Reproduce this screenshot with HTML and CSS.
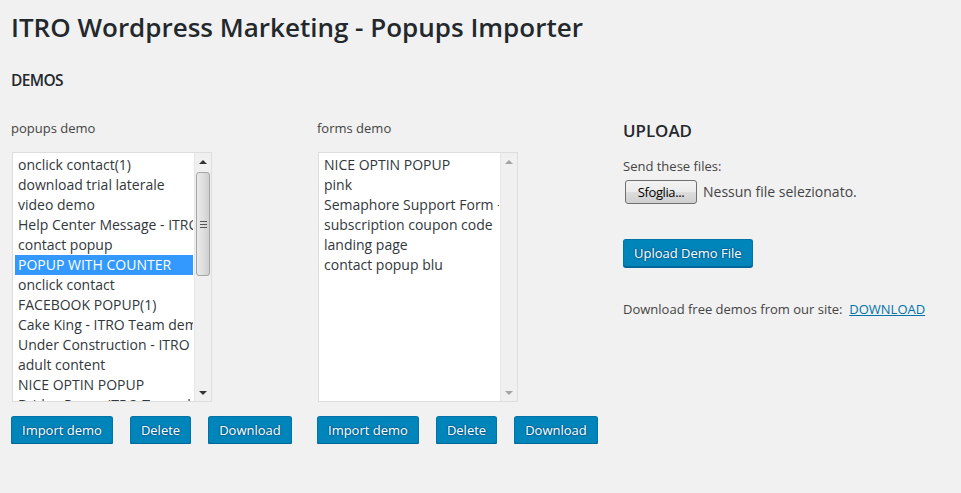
FILE: index.html
```html
<!DOCTYPE html>
<html lang="it">
<head>
<meta charset="utf-8">
<title>ITRO Wordpress Marketing - Popups Importer</title>
<link rel="stylesheet" href="styles.css">
</head>
<body>
<div class="wrap">
  <h1 class="page-title">ITRO Wordpress Marketing - Popups Importer</h1>
  <h3 class="section-title demos-title">DEMOS</h3>
  <div class="columns">
    <div class="col">
      <p class="label">popups demo</p>
      <div class="listbox">
        <ul class="items">
          <li>onclick contact(1)</li>
          <li>download trial laterale</li>
          <li>video demo</li>
          <li>Help Center Message - ITRO Team demo</li>
          <li>contact popup</li>
          <li class="selected">POPUP WITH COUNTER</li>
          <li>onclick contact</li>
          <li>FACEBOOK POPUP(1)</li>
          <li>Cake King - ITRO Team demo</li>
          <li>Under Construction - ITRO Team demo</li>
          <li>adult content</li>
          <li>NICE OPTIN POPUP</li>
          <li>Bridge Page - ITRO Team demo</li>
        </ul>
        <div class="scrollbar">
          <span class="arrow up"></span>
          <div class="track">
            <div class="thumb"><span class="grip"></span></div>
          </div>
          <span class="arrow down"></span>
        </div>
      </div>
      <div class="actions">
        <button class="button">Import demo</button>
        <button class="button">Delete</button>
        <button class="button">Download</button>
      </div>
    </div>
    <div class="col">
      <p class="label">forms demo</p>
      <div class="listbox">
        <ul class="items">
          <li>NICE OPTIN POPUP</li>
          <li>pink</li>
          <li>Semaphore Support Form - ITRO Team demo</li>
          <li>subscription coupon code</li>
          <li>landing page</li>
          <li>contact popup blu</li>
        </ul>
        <div class="scrollbar disabled">
          <span class="arrow up"></span>
          <div class="track"></div>
          <span class="arrow down"></span>
        </div>
      </div>
      <div class="actions">
        <button class="button">Import demo</button>
        <button class="button">Delete</button>
        <button class="button">Download</button>
      </div>
    </div>
    <div class="col upload">
      <h3 class="section-title upload-title">UPLOAD</h3>
      <p class="send">Send these files:</p>
      <div class="file-input">
        <span class="browse">Sfoglia...</span>
        <span class="no-file">Nessun file selezionato.</span>
      </div>
      <button class="button upload-btn">Upload Demo File</button>
      <p class="free">Download free demos from our site:&nbsp; <a href="#" class="link">DOWNLOAD</a></p>
    </div>
  </div>
</div>
</body>
</html>
```

FILE: styles.css
```css
html, body {
  margin: 0;
  padding: 0;
}
body {
  background: #f1f1f1;
  color: #444;
  font-family: "Open Sans", "Liberation Sans", sans-serif;
  font-size: 13px;
  line-height: 1.4em;
}
.wrap {
  padding: 11px 0 0 11px;
}
.page-title {
  margin: 0;
  font-size: 26px;
  font-weight: 600;
  line-height: 32px;
  color: #23282d;
}
.section-title {
  margin: 0;
  font-size: 16.9px;
  font-weight: 600;
  line-height: 20px;
  color: #23282d;
}
.demos-title {
  margin-top: 27px;
  font-size: 15.5px;
  letter-spacing: -0.6px;
}
.columns {
  display: grid;
  grid-template-columns: 306px 306px 306px;
  margin-top: 28px;
}
.label {
  margin: 0;
  line-height: 20px;
}
.listbox {
  margin: 14px 0 0 1px;
  width: 198px;
  height: 248px;
  border: 1px solid #ddd;
  background: #fff;
  display: flex;
  overflow: hidden;
}
.items {
  list-style: none;
  margin: 0;
  padding: 2px 1px 0 2px;
  width: 178px;
  flex: none;
  overflow: hidden;
  font-size: 14px;
  color: #32373c;
}
.items li {
  height: 20px;
  line-height: 20px;
  padding-left: 3px;
  white-space: nowrap;
  overflow: hidden;
}
.items li.selected {
  background: #3399ff;
  color: #fff;
}
.scrollbar {
  width: 17px;
  flex: none;
  background: #f0f0f0;
  border-left: 1px solid #e6e6e6;
  display: flex;
  flex-direction: column;
  box-sizing: border-box;
}
.arrow {
  height: 17px;
  flex: none;
  display: flex;
  align-items: center;
  justify-content: center;
}
.arrow::before {
  content: "";
  width: 0;
  height: 0;
  border-left: 4px solid transparent;
  border-right: 4px solid transparent;
}
.arrow.up::before {
  border-bottom: 4px solid #333;
}
.arrow.down::before {
  border-top: 4px solid #333;
}
.disabled .arrow.up::before {
  border-bottom-color: #a3a3a3;
}
.disabled .arrow.down::before {
  border-top-color: #a3a3a3;
}
.track {
  flex: 1;
}
.thumb {
  margin: 2px 1px 0 1px;
  height: 104px;
  border: 1px solid #a5a5a5;
  border-radius: 3px;
  background: linear-gradient(to right, #eaeaea, #dcdcdc 60%, #cfcfcf);
  box-sizing: border-box;
  display: flex;
  align-items: center;
  justify-content: center;
}
.grip {
  width: 7px;
  height: 7px;
  background: repeating-linear-gradient(to bottom, #555 0 1px, transparent 1px 3px);
}
.actions {
  display: flex;
  gap: 17px;
  margin-top: 14px;
}
.button {
  height: 28px;
  padding: 0 10px 1px;
  font-family: "Open Sans", "Liberation Sans", sans-serif;
  font-size: 13px;
  line-height: 26px;
  color: #fff;
  background: #0085ba;
  border: 1px solid #0073aa;
  border-bottom-color: #006799;
  border-radius: 3px;
  box-shadow: 0 1px 0 #006799;
  text-shadow: 0 -1px 1px #006799, 1px 0 1px #006799, 0 1px 1px #006799, -1px 0 1px #006799;
  cursor: pointer;
}
.upload {
  display: flex;
  flex-direction: column;
  align-items: flex-start;
}
.upload-title {
  margin-top: 3px;
}
.send {
  margin: 15px 0 0;
  line-height: 20px;
}
.file-input {
  display: flex;
  align-items: center;
  gap: 6px;
  margin: 4px 0 0 2px;
}
.browse {
  width: 72px;
  height: 24px;
  box-sizing: border-box;
  border: 1px solid #707070;
  border-radius: 3px;
  background: linear-gradient(to bottom, #f2f2f2, #ebebeb 50%, #dddddd 50%, #cfcfcf);
  color: #000;
  font-family: "Open Sans", "Liberation Sans", sans-serif;
  font-size: 13px;
  letter-spacing: -0.4px;
  line-height: 22px;
  text-align: center;
}
.no-file {
  font-size: 14px;
  color: #444;
}
.upload-btn {
  margin-top: 35px;
}
.free {
  margin: 32px 0 0;
  line-height: 20px;
}
.link {
  color: #0073aa;
  text-decoration: underline;
}
```
